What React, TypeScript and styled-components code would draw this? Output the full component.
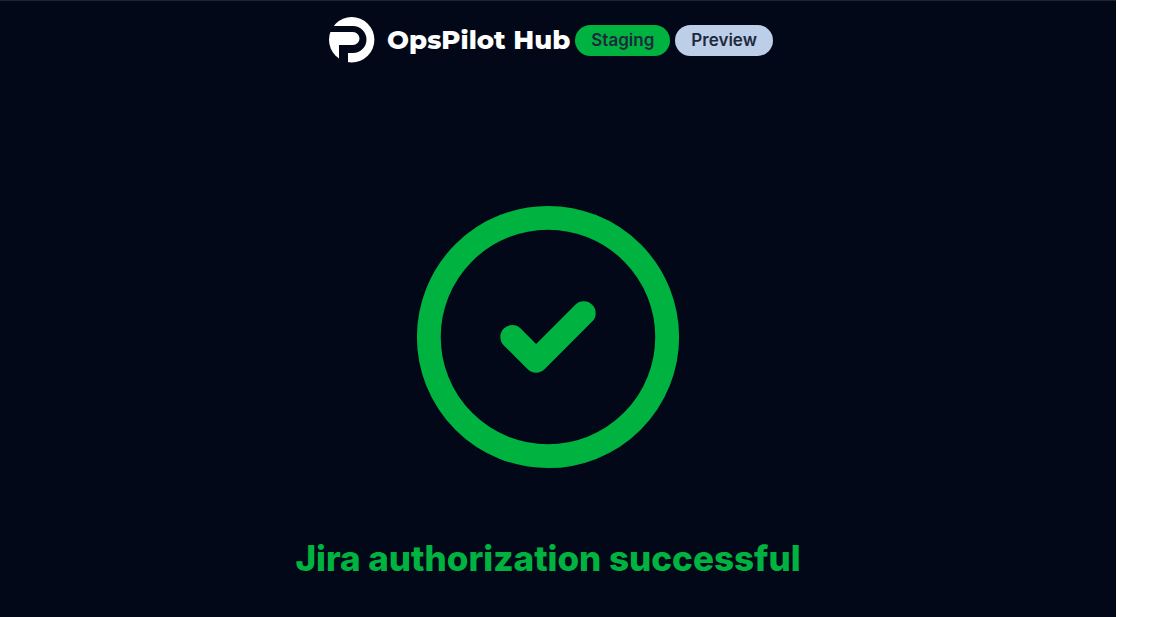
import React from 'react';
import styled, { createGlobalStyle } from 'styled-components';
import { CircleCheck } from 'lucide-react';

const GlobalStyle = createGlobalStyle`
  * { box-sizing: border-box; }
  body { margin: 0; background: #ffffff; font-family: Inter, sans-serif; }
`;

const Page = styled.div`
  min-height: 100vh;
  margin-right: 56px;
  padding-right: 20px;
  background: #020817;
  border-top: 1px solid #1f242b;
  display: flex;
  flex-direction: column;
`;

const Header = styled.header`
  display: flex;
  align-items: center;
  justify-content: center;
  gap: 5px;
  padding: 16px 0 0 6px;
`;

const Brand = styled.a`
  display: flex;
  align-items: center;
  gap: 12px;
  color: #ffffff;
  font-family: Montserrat, Inter, sans-serif;
  font-size: 26px;
  font-weight: 800;
  line-height: 45px;
  text-decoration: none;
  white-space: nowrap;
`;

const Pill = styled.span<{ $color: string }>`
  padding: 0 16px;
  border-radius: 16px;
  background: ${({ $color }) => $color};
  color: #1c2a3c;
  font-size: 17px;
  font-weight: 600;
  line-height: 31px;
`;

const Main = styled.main`
  display: flex;
  flex-direction: column;
  align-items: center;
  padding-top: 131px;
  color: #00b341;
`;

const Title = styled.h1`
  margin: 54px 0 0;
  font-size: 35px;
  font-weight: 800;
  line-height: 48px;
  white-space: nowrap;
`;

const Logo = () => (
  <svg width="46" height="46" viewBox="0 0 46 46" aria-hidden="true">
    <circle cx="22.7" cy="22.8" r="22.7" fill="#ffffff" />
    <path
      d="M0 9H24a13.5 13.5 0 0 1 0 27H19V46H10V28H24a6.5 6.5 0 0 0 0-13H0Z"
      fill="#020817"
    />
  </svg>
);

export default function App() {
  return (
    <>
      <GlobalStyle />
      <Page>
        <Header>
          <Brand href="#"><Logo />OpsPilot Hub</Brand>
          <Pill $color="#00b341">Staging</Pill>
          <Pill $color="#bdcee9">Preview</Pill>
        </Header>
        <Main>
          <CircleCheck size={286} aria-hidden="true" />
          <Title>Jira authorization successful</Title>
        </Main>
      </Page>
    </>
  );
}
